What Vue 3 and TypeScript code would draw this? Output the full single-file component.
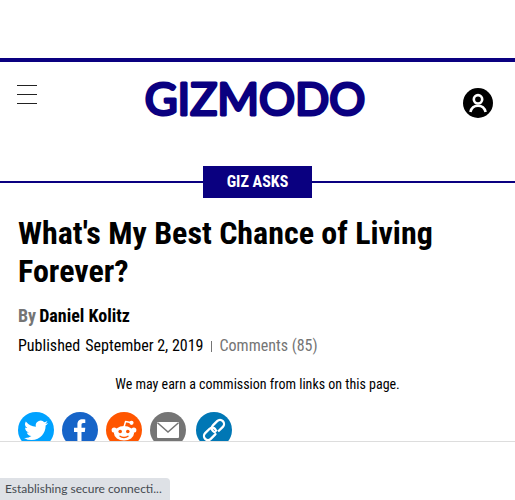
<script setup lang="ts">
interface ShareLink {
  id: 'twitter' | 'facebook' | 'reddit' | 'email' | 'link'
  label: string
}

const shareLinks: ShareLink[] = [
  { id: 'twitter', label: 'Share on Twitter' },
  { id: 'facebook', label: 'Share on Facebook' },
  { id: 'reddit', label: 'Share on Reddit' },
  { id: 'email', label: 'Share by email' },
  { id: 'link', label: 'Copy link' },
]
</script>

<template>
  <div class="page">
    <header class="masthead">
      <button class="menu" type="button" aria-label="Menu">
        <span class="bar"></span>
        <span class="bar"></span>
        <span class="bar"></span>
      </button>
      <a class="logo" href="#" aria-label="Gizmodo">
        <svg width="260" height="64" viewBox="0 0 260 64">
          <text class="wordmark" x="130" y="47" text-anchor="middle">GIZMODO</text>
        </svg>
      </a>
      <button class="account" type="button" aria-label="Account">
        <svg width="30" height="30" viewBox="0 0 30 30" fill="none" stroke="#fff" stroke-width="2.6">
          <circle cx="15" cy="11.3" r="4.2" />
          <path d="M7.4 24c1-4 4.200-6.200 7.600-6.200s6.600 2.200 7.600 6.200" />
        </svg>
      </button>
    </header>

    <div class="section">
      <a class="section-tag" href="#">GIZ ASKS</a>
    </div>

    <main class="article">
      <h1 class="title">What's My Best Chance of Living Forever?</h1>
      <div class="byline"><span class="by">By</span><a class="author" href="#">Daniel Kolitz</a></div>
      <div class="meta">
        <span>Published</span>
        <time datetime="2019-09-02">September 2, 2019</time>
        <a class="comments" href="#">Comments (85)</a>
      </div>
      <p class="notice">We may earn a commission from links on this page.</p>
      <nav class="share" aria-label="Share">
        <a
          v-for="item in shareLinks"
          :key="item.id"
          class="share-link"
          :class="item.id"
          href="#"
          :aria-label="item.label"
        >
          <svg v-if="item.id === 'twitter'" width="36" height="36" viewBox="0 0 36 36" fill="#fff">
            <g transform="translate(6.500 6)">
              <path d="M23.6 4.900a9.700 9.700 0 0 1-2.800.8 4.900 4.900 0 0 0 2.100-2.700 9.700 9.700 0 0 1-3.100 1.200 4.900 4.900 0 0 0-8.400 4.500A13.900 13.900 0 0 1 1.300 3.600a4.900 4.900 0 0 0 1.500 6.500 4.900 4.900 0 0 1-2.200-.6v.1a4.900 4.900 0 0 0 3.900 4.800 4.900 4.900 0 0 1-2.200.1 4.900 4.900 0 0 0 4.600 3.400A9.800 9.800 0 0 1-.4 19.900a13.900 13.900 0 0 0 7.500 2.200c9.100 0 14-7.500 14-14v-.6a10 10 0 0 0 2.500-2.600z" />
            </g>
          </svg>
          <svg v-else-if="item.id === 'facebook'" width="36" height="36" viewBox="0 0 36 36" fill="#fff">
            <path d="M15.400 30V20H12v-4.300h3.400v-3.200c0-3.300 2-5.200 5.100-5.200 1.300 0 2.400.1 2.800.2v3.600h-2c-1.400 0-1.800.8-1.800 1.900v2.700h3.800l-.5 4.300h-3.300v10z" />
          </svg>
          <svg v-else-if="item.id === 'reddit'" width="36" height="36" viewBox="0 0 36 36">
            <path d="M18 15l1.600-5.500 5 1" fill="none" stroke="#fff" stroke-width="1.500" stroke-linecap="round" stroke-linejoin="round" />
            <circle cx="25.500" cy="10.800" r="2.100" fill="#fff" />
            <circle cx="8.200" cy="18" r="2.600" fill="#fff" />
            <circle cx="27.800" cy="18" r="2.600" fill="#fff" />
            <ellipse cx="18" cy="21.300" rx="10" ry="7.300" fill="#fff" />
            <circle cx="14.200" cy="19.500" r="1.800" fill="#ff5600" />
            <circle cx="21.800" cy="19.500" r="1.800" fill="#ff5600" />
            <path d="M14 24.200c2 1.700 6 1.700 8 0" fill="none" stroke="#ff5600" stroke-width="1.300" stroke-linecap="round" />
          </svg>
          <svg v-else-if="item.id === 'email'" width="36" height="36" viewBox="0 0 36 36">
            <rect x="7" y="10" width="22" height="16" rx="1" fill="#fff" />
            <path d="M7.500 10.800L18 20l10.500-9.200" fill="none" stroke="#757575" stroke-width="1.500" />
          </svg>
          <svg v-else width="36" height="36" viewBox="0 0 36 36" fill="none">
            <g transform="rotate(-45 18 18)" stroke-width="2.300">
              <rect x="5.500" y="14" width="14" height="8" rx="4" stroke="#fff" />
              <path d="M16 14.500h4" stroke="#0077b5" stroke-width="4.500" />
              <rect x="16.500" y="14" width="14" height="8" rx="4" stroke="#fff" />
              <path d="M15.500 14a4 4 0 0 1 4 4" stroke="#fff" />
              <path d="M17.200 22.500h2.600" stroke="#0077b5" stroke-width="3" />
            </g>
          </svg>
        </a>
      </nav>
    </main>

    <aside class="dock" aria-label="Status">
      <div class="status">Establishing secure connecti...</div>
    </aside>
  </div>
</template>

<style>
html,
body {
  margin: 0;
  background: #fff;
}

body {
  overflow: hidden;
}
</style>

<style scoped>
.page {
  padding-top: 58px;
  color: #000;
  font-family: "Roboto Condensed", "Liberation Sans Narrow", Roboto, sans-serif;
}

a {
  color: inherit;
  text-decoration: none;
}

button {
  padding: 0;
  border: 0;
  cursor: pointer;
}

.masthead {
  display: grid;
  grid-template-columns: 30px 1fr 30px;
  align-items: start;
  height: 104px;
  padding: 0 22px 0 17px;
  border-top: 4px solid #0a0080;
  box-sizing: border-box;
}

.menu {
  display: flex;
  flex-direction: column;
  gap: 8px;
  width: 20px;
  margin-top: 23px;
  background: none;
}

.bar {
  height: 1px;
  background: #222;
}

.logo {
  justify-self: center;
  margin-top: 6px;
}

.logo svg,
.account svg,
.share-link svg {
  display: block;
}

.wordmark {
  fill: #0a0080;
  stroke: #0a0080;
  stroke-width: 3px;
  stroke-linejoin: round;
  font: 400 45px Lato, sans-serif;
}

.account {
  width: 30px;
  height: 30px;
  margin-top: 26px;
  border-radius: 50%;
  background: #000;
}

.section {
  display: flex;
  align-items: center;
  margin-top: 4px;
}

.section::before,
.section::after {
  flex: 1;
  height: 2px;
  background: #0a0080;
  content: "";
}

.section-tag {
  padding: 0 24px;
  background: #0a0080;
  color: #fff;
  font-size: 16px;
  font-weight: 700;
  line-height: 32px;
}

.article {
  padding: 16px 18px 0;
}

.title {
  margin: 0;
  font-size: 32px;
  font-weight: 700;
  line-height: 38px;
}

.byline {
  display: flex;
  gap: 3px;
  margin-top: 14px;
  font-size: 18px;
  font-weight: 700;
  line-height: 24px;
}

.by {
  color: #757575;
}

.meta {
  display: flex;
  align-items: center;
  gap: 5px;
  margin-top: 6px;
  font-size: 16px;
  line-height: 24px;
}

.comments {
  display: flex;
  align-items: center;
  gap: 8px;
  margin-left: 2px;
  color: #757575;
}

.comments::before {
  width: 1px;
  height: 11px;
  background: #757575;
  content: "";
}

.notice {
  margin: 15px 0 0;
  font-size: 14px;
  line-height: 22px;
  text-align: center;
}

.share {
  display: flex;
  gap: 8px;
  margin-top: 17px;
}

.share-link {
  width: 36px;
  height: 36px;
  border-radius: 50%;
}

.twitter {
  background: #00a2ff;
}

.facebook {
  background: #1664c8;
}

.reddit {
  background: #ff5600;
}

.email {
  background: #757575;
}

.link {
  margin-left: 2px;
  background: #0077b5;
}

.dock {
  position: fixed;
  right: 0;
  bottom: 0;
  left: 0;
  display: flex;
  align-items: flex-end;
  height: 58px;
  border-top: 1px solid #ddd;
  background: #fff;
}

.status {
  padding: 0 8px 0 5px;
  border-top-right-radius: 4px;
  background: #dee1e6;
  color: #454a50;
  font: 12px/22px Lato, "Noto Sans", sans-serif;
}
</style>
